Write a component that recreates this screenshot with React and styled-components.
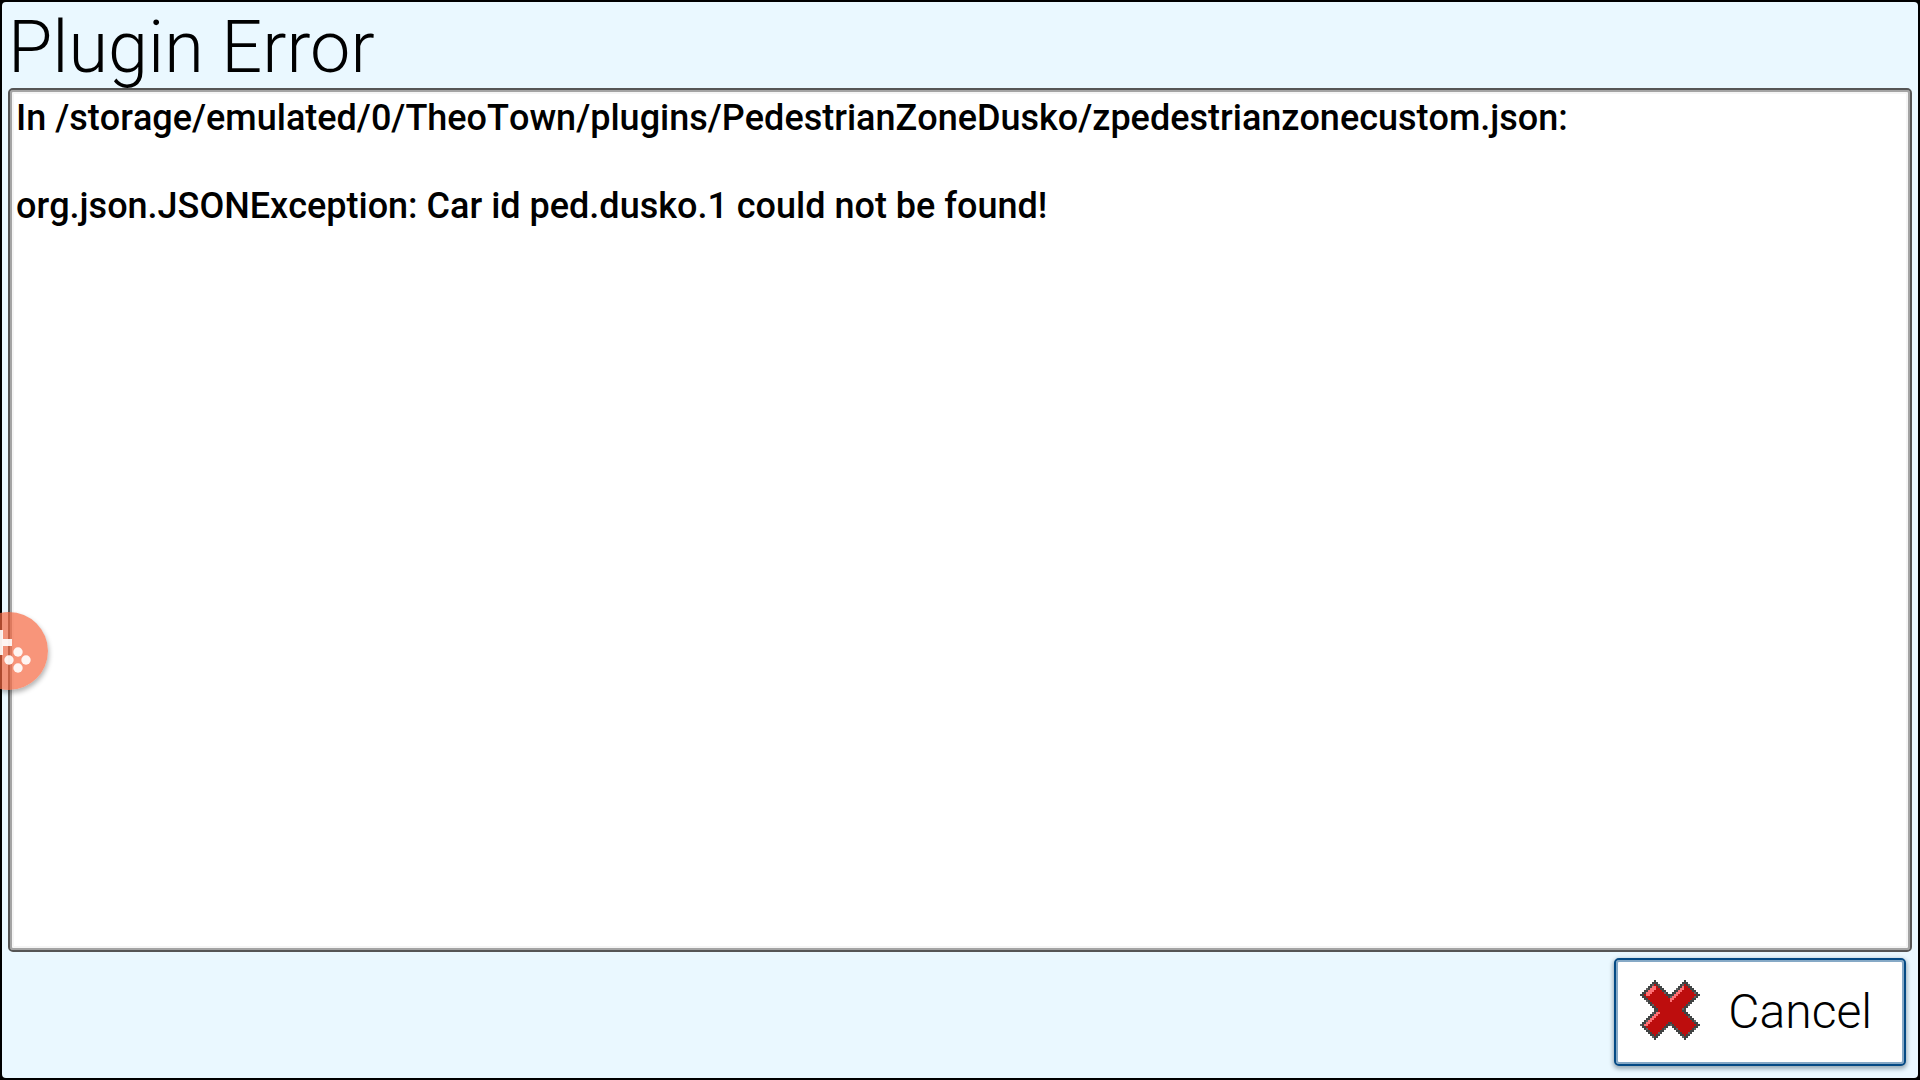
import React from "react";
import styled, { createGlobalStyle } from "styled-components";

const GlobalStyle = createGlobalStyle`
  *, *::before, *::after { box-sizing: border-box; }
  body { margin: 0; background: #000; overflow: hidden; }
`;

const Screen = styled.div`
  height: 100vh;
  padding: 2px;
  background: #000;
  color: #000;
  font-family: Roboto, "Noto Sans", sans-serif;
`;

const Dialog = styled.main`
  display: flex;
  flex-direction: column;
  height: 100%;
  padding: 0 6px;
  border-radius: 4px;
  background: #eaf8ff;
`;

const Title = styled.h1`
  margin: 0;
  height: 86px;
  font-size: 72px;
  line-height: 92px;
  font-weight: 300;
`;

const MessagePanel = styled.section`
  flex: 1;
  min-height: 0;
  overflow: auto;
  padding: 6px;
  border: 2px solid #555;
  border-radius: 5px;
  background: #fff;
  box-shadow: inset 0 0 0 2px #a4a4a4, inset 0 0 0 4px #f5f5f5;
`;

const Message = styled.p`
  margin: 0 0 44px;
  font-size: 36px;
  line-height: 44px;
  font-weight: 500;
  font-kerning: none;
  overflow-wrap: anywhere;
`;

const Footer = styled.footer`
  display: flex;
  justify-content: flex-end;
  padding: 6px 6px 12px;
`;

const ActionButton = styled.button`
  display: flex;
  align-items: center;
  gap: 28px;
  height: 108px;
  padding: 0 32px 0 24px;
  border: 2px solid #044a85;
  border-radius: 5px;
  background: #fff;
  box-shadow: inset 0 0 0 2px #86a9c6, 0 2px 4px 1px rgba(0, 30, 50, 0.35);
  color: #000;
  font-family: inherit;
  font-size: 48px;
  line-height: 56px;
  font-weight: 300;

  svg { margin-bottom: 4px; }
`;

const FloatingPad = styled.button`
  position: absolute;
  left: -30px;
  top: 612px;
  width: 78px;
  height: 78px;
  padding: 0;
  border: 0;
  border-radius: 50%;
  background: rgba(245, 104, 66, 0.7);
  box-shadow: 1px 3px 5px rgba(0, 0, 0, 0.3);

  svg { display: block; }
`;

const GRID = 30;

function crossColor(x, y) {
  const dx = x - 14.5;
  const dy = y - 14.5;
  const u = dx + dy;
  const v = dx - dy;
  const inside = (a, b) =>
    (Math.abs(u) <= a && Math.abs(v) <= b) ||
    (Math.abs(v) <= a && Math.abs(u) <= b);
  if (!inside(7, 22)) return null;
  if (!inside(5, 20)) return x % 3 === 0 && y % 2 === 0 ? "#606060" : "#414444";
  if (u <= -18 && Math.abs(v) <= 4) return "#ff6f73";
  if (u <= -4 && u >= -5 && v >= 5 && v <= 18) return "#ff6f73";
  if (u <= -4 && u >= -5 && v <= -7) return "#ff6f73";
  return "#bd0d0d";
}

function CrossIcon() {
  const cells = [];
  for (let y = 0; y < GRID; y += 1) {
    for (let x = 0; x < GRID; x += 1) {
      const fill = crossColor(x, y);
      if (fill) {
        cells.push(<rect key={`${x}-${y}`} x={x} y={y} width="1" height="1" fill={fill} />);
      }
    }
  }
  return (
    <svg width="60" height="60" viewBox="0 0 30 30" shapeRendering="crispEdges" aria-hidden="true">
      {cells}
    </svg>
  );
}

function PadIcon() {
  return (
    <svg width="78" height="78" viewBox="0 0 78 78" fill="#fff" fillOpacity="0.9" aria-hidden="true">
      <path d="M25 18h8v9h9v7h-9v9h-8v-9h-9v-7h9z" />
      <circle cx="48" cy="40" r="4.7" />
      <circle cx="39" cy="48" r="4.7" />
      <circle cx="56" cy="48" r="4.7" />
      <circle cx="48" cy="56" r="4.7" />
    </svg>
  );
}

export default function App() {
  return (
    <Screen>
      <GlobalStyle />
      <Dialog>
        <Title>Plugin Error</Title>
        <MessagePanel>
          <Message>
            In /storage/emulated/0/TheoTown/plugins/PedestrianZoneDusko/zpedestrianzonecustom.json:
          </Message>
          <Message>
            org.json.JSONException: Car id ped.dusko.1 could not be found!
          </Message>
        </MessagePanel>
        <Footer>
          <ActionButton type="button">
            <CrossIcon />
            Cancel
          </ActionButton>
        </Footer>
      </Dialog>
      <FloatingPad type="button" aria-label="Game controls">
        <PadIcon />
      </FloatingPad>
    </Screen>
  );
}
